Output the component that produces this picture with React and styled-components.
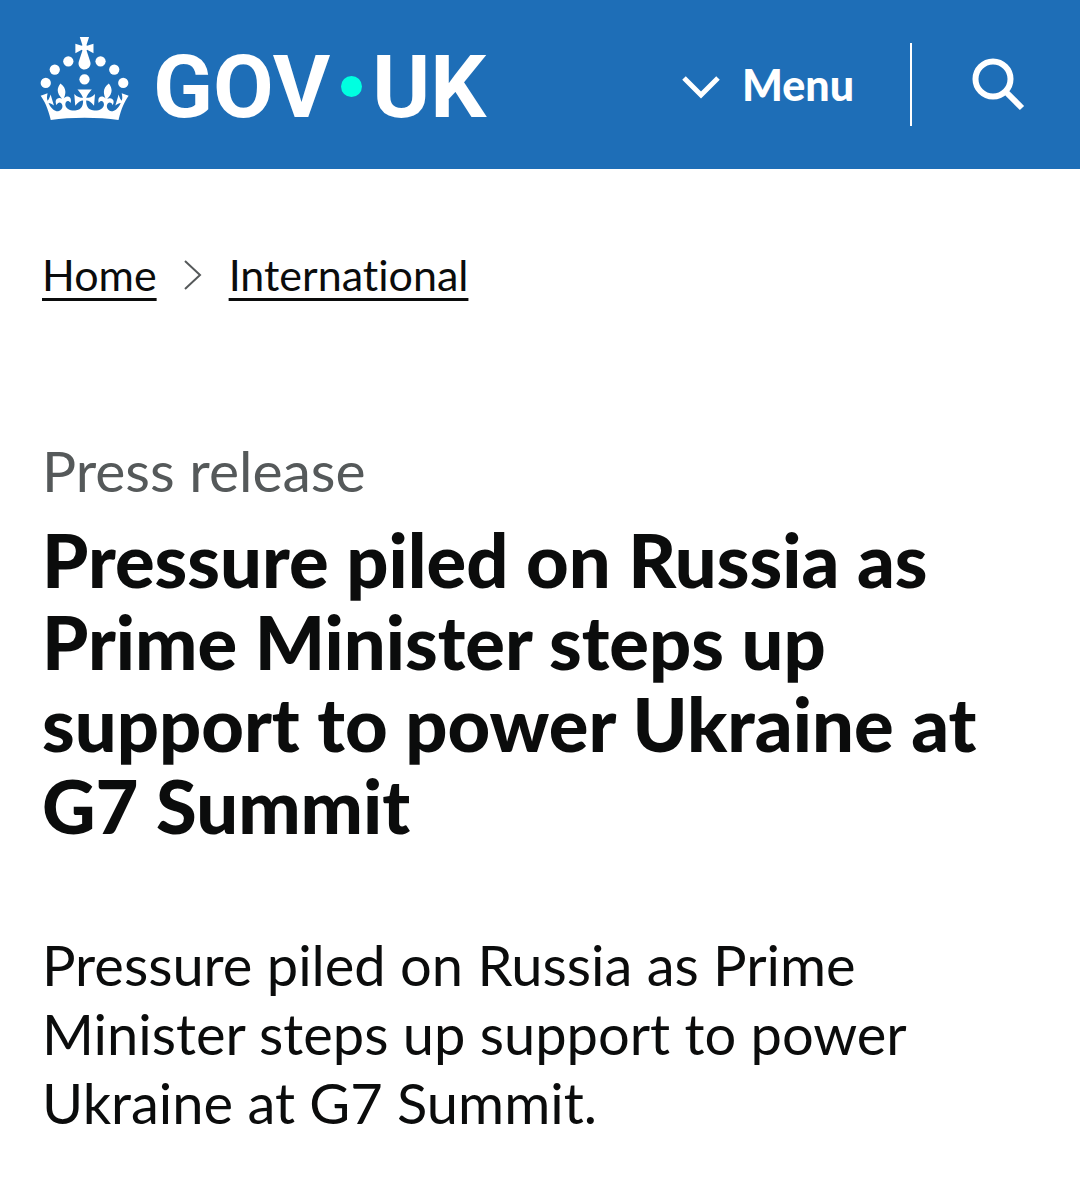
import React from 'react';
import styled, { createGlobalStyle } from 'styled-components';

const GlobalStyle = createGlobalStyle`
  body {
    margin: 0;
    background-color: #fff;
    color: #0b0c0c;
    font-family: Lato, "Noto Sans", sans-serif;
    font-variant-ligatures: no-common-ligatures;
  }
`;

const Header = styled.header`
  display: flex;
  align-items: center;
  justify-content: space-between;
  height: 169px;
  padding: 0 40px;
  box-sizing: border-box;
  background-color: #1e6eb7;
  color: #fff;
`;

const LogoLink = styled.a`
  display: flex;
  align-items: center;
  color: #fff;
  text-decoration: none;
`;

const Crown = styled.svg`
  width: 89px;
  height: 83px;
  margin: 0 24px 12px 0;
  fill: currentColor;
`;

const Wordmark = styled.span`
  display: flex;
  align-items: center;
  margin-top: 4px;
  font-family: Roboto, sans-serif;
  font-size: 88px;
  font-weight: 700;
  line-height: 100px;
`;

const Dot = styled.span`
  width: 21px;
  height: 21px;
  margin: 0 10px 0 11px;
  border-radius: 50%;
  background-color: #00ffe0;
`;

const Controls = styled.div`
  display: flex;
  align-items: center;
`;

const HeaderButton = styled.button`
  display: flex;
  align-items: center;
  gap: 22px;
  padding: ${(props) => props.$padding || '0'};
  border: 0;
  background: none;
  color: #fff;
  font-family: inherit;
  font-size: 43px;
  font-weight: 900;
  line-height: 83px;
  cursor: pointer;
`;

const Divider = styled.span`
  width: 2px;
  height: 83px;
  background-color: #fff;
`;

const Icon = styled.svg`
  display: block;
  fill: none;
  stroke: currentColor;
`;

const Main = styled.main`
  padding: 0 42px;
`;

const BreadcrumbList = styled.ol`
  display: flex;
  align-items: center;
  gap: 27px;
  margin: 0;
  padding: 78px 0 0;
  list-style: none;
  font-size: 43px;
  line-height: 56px;
`;

const Crumb = styled.li`
  display: flex;
  align-items: center;
  gap: 27px;
`;

const CrumbLink = styled.a`
  color: #0b0c0c;
  text-decoration: underline;
  text-decoration-thickness: 3px;
  text-underline-offset: 7px;
`;

const Caption = styled.span`
  display: block;
  padding-top: 133px;
  color: #55595a;
  font-size: 57px;
  line-height: 68px;
`;

const Title = styled.h1`
  margin: 15px 0 0;
  font-size: 74px;
  font-weight: 900;
  line-height: 82px;
`;

const Lead = styled.p`
  margin: 83px 0 0;
  padding-bottom: 40px;
  font-size: 56px;
  line-height: 69px;
`;

const App = () => {
  return (
    <>
      <GlobalStyle />
      <Header>
        <LogoLink href="#" aria-label="GOV.UK">
          <Crown viewBox="0 0 63.4 60" aria-hidden="true">
            <circle cx="20" cy="17.6" r="3.7" />
            <circle cx="10.2" cy="23.5" r="3.7" />
            <circle cx="3.7" cy="33.2" r="3.7" />
            <circle cx="31.7" cy="30.6" r="3.7" />
            <circle cx="43.3" cy="17.6" r="3.7" />
            <circle cx="53.2" cy="23.5" r="3.7" />
            <circle cx="59.7" cy="33.2" r="3.7" />
            <path d="M33.1,9.8c.2-.1.3-.3.5-.5l4.6,2.4v-6.8l-4.6,1.5c-.1-.2-.3-.3-.5-.5l1.9-5.9h-6.7l1.9,5.9c-.2.1-.3.3-.5.5l-4.6-1.5v6.8l4.6-2.4c.1.2.3.3.5.5l-2.6,8c-.9,2.8,1.2,5.7,4.1,5.7h0c3,0,5.1-2.9,4.1-5.7l-2.6-8ZM37,37.9s-3.4,3.8-4.1,6.1c2.2,0,4.2-.5,6.4-2.8l-.7,8.5c-2-2.8-4.4-4.1-5.7-3.8.1,3.1.5,6.7,5.8,7.2,3.7.3,6.7-1.5,7-3.8.4-2.6-2-4.3-3.7-1.6-1.4-4.5,2.4-6.1,4.9-3.2-1.9-4.5-1.8-7.7,2.4-10.9,3,4,2.6,7.3-1.2,11.1,2.4-1.3,6.2,0,4,4.6-1.2-2.8-3.7-2.2-4.2.2-.3,1.7.7,3.7,3,4.2,1.9.3,4.7-.9,7-5.9-1.3,0-2.4.7-3.9,1.7l2.4-8c.6,2.3,1.4,3.7,2.2,4.5.6-1.6.5-2.8,0-5.3l5,1.8c-2.6,3.6-5.2,8.7-7.3,17.5-7.4-1.1-15.7-1.7-24.5-1.7h0c-8.8,0-17.1.6-24.5,1.7-2.1-8.9-4.7-13.9-7.3-17.5l5-1.8c-.5,2.5-.6,3.7,0,5.3.8-.8,1.6-2.3,2.2-4.5l2.4,8c-1.5-1-2.6-1.7-3.9-1.7,2.3,5,5.2,6.2,7,5.9,2.3-.4,3.3-2.4,3-4.2-.5-2.4-3-3.1-4.2-.2-2.2-4.6,1.6-6,4-4.6-3.7-3.7-4.2-7.1-1.2-11.1,4.2,3.2,4.3,6.4,2.4,10.9,2.5-2.8,6.3-1.3,4.9,3.2-1.8-2.7-4.1-1-3.7,1.6.3,2.3,3.3,4.1,7,3.8,5.4-.5,5.7-4.2,5.8-7.2-1.3-.2-3.7,1-5.7,3.8l-.7-8.5c2.2,2.3,4.2,2.7,6.4,2.8-.7-2.3-4.1-6.1-4.1-6.1h10.6Z" />
          </Crown>
          <Wordmark>
            GOV
            <Dot />
            UK
          </Wordmark>
        </LogoLink>
        <Controls>
          <HeaderButton type="button" $padding="0 56px 0 0">
            <Icon width="38" height="28" viewBox="0 0 38 28" strokeWidth="5" aria-hidden="true">
              <path d="M2 7L19 24L36 7" />
            </Icon>
            Menu
          </HeaderButton>
          <Divider />
          <HeaderButton type="button" aria-label="Search" $padding="0 14px 0 60px">
            <Icon width="54" height="54" viewBox="0 0 54 54" strokeWidth="6" aria-hidden="true">
              <circle cx="21" cy="21" r="17.5" />
              <path d="M33 33L50 50" />
            </Icon>
          </HeaderButton>
        </Controls>
      </Header>
      <Main>
        <nav aria-label="Breadcrumb">
          <BreadcrumbList>
            <Crumb>
              <CrumbLink href="#">Home</CrumbLink>
              <Icon width="18" height="32" viewBox="0 0 18 32" strokeWidth="2" color="#55595a" aria-hidden="true">
                <path d="M1 2L16 16L1 30" />
              </Icon>
            </Crumb>
            <Crumb>
              <CrumbLink href="#">International</CrumbLink>
            </Crumb>
          </BreadcrumbList>
        </nav>
        <Caption>Press release</Caption>
        <Title>
          Pressure piled on Russia as Prime Minister steps up support to power Ukraine at G7 Summit
        </Title>
        <Lead>
          Pressure piled on Russia as Prime Minister steps up support to power Ukraine at G7 Summit.
        </Lead>
      </Main>
    </>
  );
};

export default App;
